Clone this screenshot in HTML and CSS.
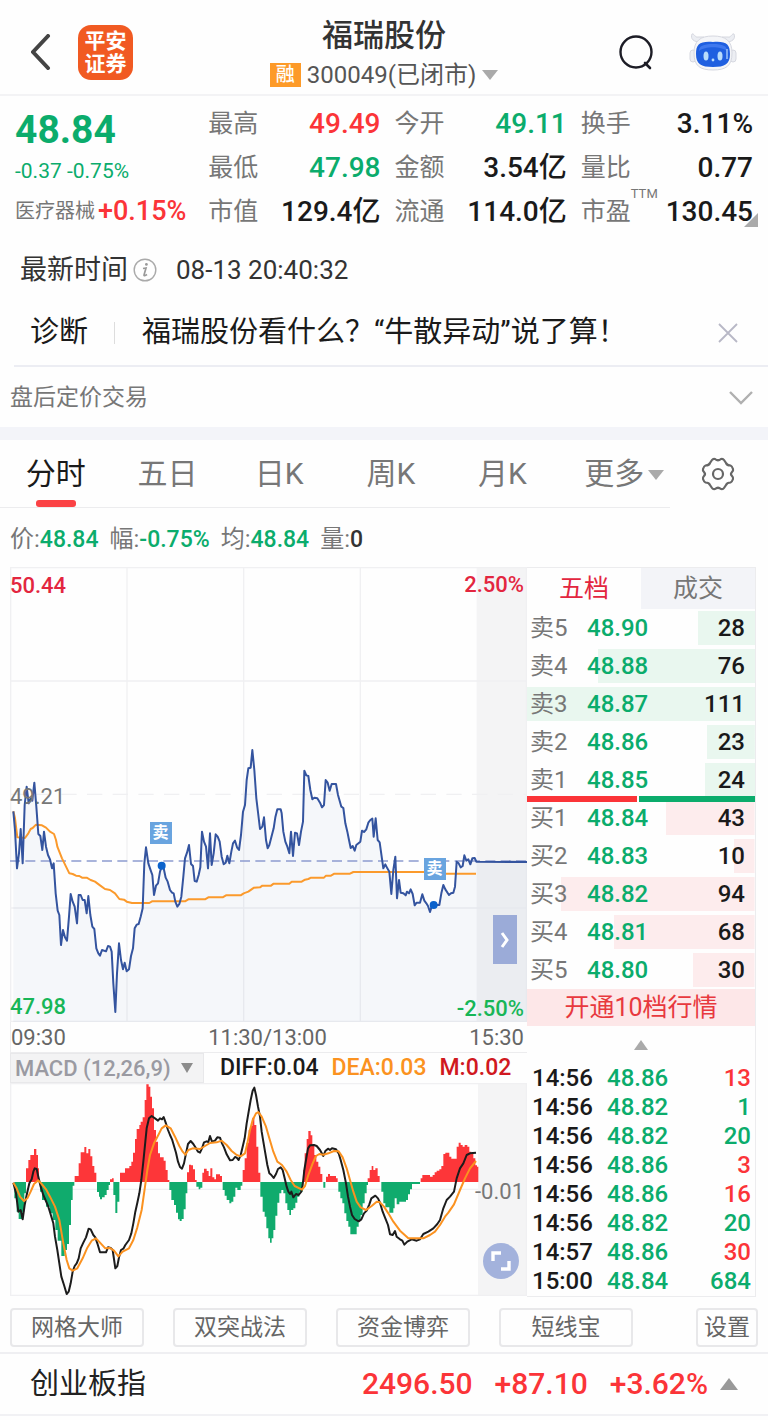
FILE: index.html
```html
<!DOCTYPE html>
<html lang="zh-CN">
<head>
  <meta charset="UTF-8">
  <meta name="viewport" content="width=device-width, initial-scale=1">
  <title>福瑞股份 300049</title>
  <link rel="stylesheet" href="styles.css">
</head>
<body>
  <header class="topbar">
    <div class="topbar-left">
      <button class="icon-btn" aria-label="返回">
        <svg width="20" height="36" viewBox="0 0 20 36"><path d="M17 2 L2 18 L17 34" fill="none" stroke="#444" stroke-width="4" stroke-linecap="round"/></svg>
      </button>
      <div class="logo"><span>平安</span><span>证券</span></div>
    </div>
    <div class="topbar-title">
      <h1>福瑞股份</h1>
      <div class="code"><span class="tag">融</span>300049(已闭市)<span class="tri-down"></span></div>
    </div>
    <div class="topbar-right">
      <button class="icon-btn" aria-label="搜索">
        <svg width="34" height="36" viewBox="0 0 34 36"><circle cx="17" cy="18" r="15.5" fill="none" stroke="#1d1d26" stroke-width="2.4"/><path d="M26 29 L31 34" stroke="#1d1d26" stroke-width="2.6" stroke-linecap="round"/></svg>
      </button>
      <button class="icon-btn" aria-label="智能助手">
        <svg width="48" height="40" viewBox="0 0 48 40">
          <g fill="#eceef3" stroke="#d6d8e0" stroke-width="1">
            <path d="M11 10 C5 10 1 7 3 2 C5 1 6 6 9 5 L15 5Z"/>
            <path d="M37 10 C43 10 47 7 45 2 C43 1 42 6 39 5 L33 5Z"/>
            <rect x="1" y="18" width="6" height="12" rx="3"/>
            <rect x="41" y="18" width="6" height="12" rx="3"/>
            <path d="M24 4 C37 4 43 9 43 21 C43 34 37 38 24 38 C11 38 5 34 5 21 C5 9 11 4 24 4Z" fill="#f4f5f8"/>
          </g>
          <path d="M24 10 C37 9 41 12 41 22 C41 32 36 35 24 35 C12 35 7 32 7 22 C7 12 11 9 24 10Z" fill="#1f5fe0"/>
          <path d="M24 12 C34 12 38 14 38 19 C32 14 16 14 10 19 C10 14 14 12 24 12Z" fill="#3f78ee"/>
          <ellipse cx="17" cy="24" rx="2.5" ry="4.5" fill="#b9dcfb"/>
          <ellipse cx="31" cy="24" rx="2.5" ry="4.5" fill="#b9dcfb"/>
          <circle cx="24" cy="28" r="1.4" fill="#b9dcfb"/>
          <path d="M38 17 V27" stroke="#9dc3fb" stroke-width="1.5"/>
        </svg>
      </button>
    </div>
  </header>

  <section class="quote">
    <div class="quote-main">
      <div class="price green">48.84</div>
      <div class="change green">-0.37 -0.75%</div>
      <div class="sector">医疗器械<b class="red">+0.15%</b></div>
    </div>
    <dl>
      <div><dt>最高</dt><dd class="red">49.49</dd></div>
      <div><dt>最低</dt><dd class="green">47.98</dd></div>
      <div><dt>市值</dt><dd>129.4亿</dd></div>
    </dl>
    <dl>
      <div><dt>今开</dt><dd class="green">49.11</dd></div>
      <div><dt>金额</dt><dd>3.54亿</dd></div>
      <div><dt>流通</dt><dd>114.0亿</dd></div>
    </dl>
    <dl>
      <div><dt>换手</dt><dd>3.11%</dd></div>
      <div><dt>量比</dt><dd>0.77</dd></div>
      <div><dt>市盈<span class="ttm">TTM</span></dt><dd>130.45</dd></div>
    </dl>
    <span class="corner"></span>
  </section>

  <div class="time-row">
    <span>最新时间</span>
    <svg width="24" height="24" viewBox="0 0 24 24"><circle cx="12" cy="12" r="10.8" fill="none" stroke="#aaa" stroke-width="1.4"/><circle cx="13.4" cy="6.4" r="1.4" fill="#999"/><path d="M10 10.5 L13 10 L11 17 Q11 18.5 14 16.5" fill="none" stroke="#999" stroke-width="1.7"/></svg>
    <time>08-13 20:40:32</time>
  </div>

  <div class="diagnose">
    <span>诊断</span>
    <i class="divider"></i>
    <a href="#">福瑞股份看什么？“牛散异动”说了算！</a>
    <button class="icon-btn" aria-label="关闭">
      <svg width="20" height="20" viewBox="0 0 20 20"><path d="M1 1 L19 19 M19 1 L1 19" stroke="#b8b8c6" stroke-width="1.8"/></svg>
    </button>
  </div>

  <button class="after-hours">
    <span>盘后定价交易</span>
    <svg width="26" height="16" viewBox="0 0 26 16"><path d="M2 2 L13 13 L24 2" fill="none" stroke="#b0b0b0" stroke-width="2.4"/></svg>
  </button>

  <div class="band"></div>

  <nav class="periods">
    <div class="period-list">
      <button class="active">分时</button>
      <button>五日</button>
      <button>日K</button>
      <button>周K</button>
      <button>月K</button>
      <button class="more">更多<span class="tri-down"></span></button>
    </div>
    <button class="icon-btn gear" aria-label="图表设置">
      <svg width="34" height="34" viewBox="0 0 34 34"><path d="M11 3 Q12 1.5 14 2 Q17 4.500 20 2 Q22 1.500 23 3 L25 6 Q26 8.500 29.500 8.500 Q31 9 32 12 Q32.500 13.500 31 15 Q29 17 31 19 Q32.500 20.500 32 22 Q31 25 29.500 25.500 Q26 25.500 25 28 L23 31 Q22 32.500 20 32 Q17 29.500 14 32 Q12 32.500 11 31 L9 28 Q8 25.500 4.500 25.500 Q3 25 2 22 Q1.500 20.500 3 19 Q5 17 3 15 Q1.500 13.500 2 12 Q3 9 4.500 8.500 Q8 8.500 9 6 Z" fill="none" stroke="#666" stroke-width="2.2"/><circle cx="17" cy="17" r="5" fill="none" stroke="#666" stroke-width="2.2"/></svg>
    </button>
  </nav>

  <div class="info-row">
    <span>价:<b class="green">48.84</b></span>
    <span>幅:<b class="green">-0.75%</b></span>
    <span>均:<b class="green">48.84</b></span>
    <span>量:<b>0</b></span>
  </div>

  <main class="board">
    <div class="charts">
      <div class="plot">
        <svg viewBox="0 0 1551 1365">
          <rect x="1400" y="0" width="151" height="1365" fill="#f4f4f5"/>
          <g fill="none" stroke="#f0f0f2" stroke-width="4">
            <path d="M2 2 H1549 V1363 H2 Z M351 0 V1365 M701 0 V1365 M1051 0 V1365 M0 342 H1551 M0 1023 H1551"/>
            <path d="M0 682 H1551" stroke-dasharray="46 31"/>
          </g>
          <g transform="translate(-30 489)" fill="none" stroke-linejoin="round">
            <path fill="#2f53a5" fill-opacity=".045" stroke="none" d="M40,876 L40,244 45,300 51,415 57,370 62,297 68,400 74,225 80,170 86,220 92,205 97,212 103,158 109,230 115,312 121,318 127,360 132,305 138,350 150,388 156,415 161,400 167,490 173,542 178,555 183,645 189,600 201,632 212,492 224,530 231,580 236,495 254,510 260,550 265,498 277,590 283,597 289,655 300,677 318,664 324,648 335,665 346,846 357,640 369,718 380,724 393,678 404,595 416,582 428,535 438,352 451,418 462,495 474,460 486,408 503,455 521,490 532,530 544,500 555,385 567,345 573,402 584,453 601,412 606,305 624,415 630,310 635,405 647,313 659,335 671,403 682,377 688,400 705,332 717,360 729,245 745,115 757,60 769,205 780,297 792,262 804,355 821,295 832,238 842,238 850,305 868,370 873,305 879,378 885,308 897,345 909,275 913,122 925,138 937,208 952,205 966,232 972,225 977,150 989,182 995,162 1008,162 1024,230 1030,234 1036,280 1052,354 1064,362 1081,335 1086,302 1117,266 1121,320 1127,265 1133,330 1139,337 1150,415 1168,425 1174,492 1186,380 1191,505 1197,450 1202,488 1232,478 1244,526 1260,518 1267,493 1290,546 1301,525 1318,525 1330,465 1347,495 1360,488 1370,395 1382,412 1388,408 1393,376 1399,392 1411,403 1424,384 1429,395 1581,396 V876Z"/>
            <path stroke="#8d9cd0" stroke-width="5" stroke-dasharray="30 16" d="M30,393 H1581"/>
            <path stroke="#fb9a2c" stroke-width="6" d="M40,244 45,265 52,322 75,324 85,310 92,297 98,294 108,284 126,286 138,293 150,305 162,312 168,330 172,350 186,385 208,430 218,432 228,437 238,438 246,443 260,443 272,450 285,455 300,466 315,477 330,480 345,490 358,507 372,509 380,515 396,519 448,519 456,514 555,514 565,508 615,508 625,502 668,502 678,496 722,496 731,490 745,485 762,473 780,472 787,467 813,467 821,461 868,461 875,455 905,455 915,449 925,447 933,443 972,443 978,437 993,437 1003,431 1050,431 1060,426 1270,426 1330,431 1428,431"/>
            <path stroke="#34549f" stroke-width="6" d="M40,244 45,300 51,415 57,370 62,297 68,400 74,225 80,170 86,220 92,205 97,212 103,158 109,230 115,312 121,318 127,360 132,305 138,350 144,375 150,388 156,415 161,400 167,490 173,542 178,555 183,645 189,600 195,622 201,632 207,560 212,492 218,515 224,530 231,580 236,495 242,495 248,510 254,510 260,550 265,498 271,555 277,590 283,597 289,655 295,670 300,677 306,660 318,664 324,648 330,650 335,665 340,760 346,846 351,730 357,640 363,690 369,718 374,698 380,724 387,718 393,678 399,655 404,595 410,584 416,582 422,560 428,535 433,400 438,352 445,400 451,418 457,435 462,495 468,467 474,460 480,425 486,408 491,415 497,443 503,455 510,480 516,488 521,490 526,515 532,530 538,522 544,500 550,440 555,385 561,368 567,345 573,402 579,408 584,453 590,455 596,435 601,412 606,305 612,335 618,350 624,415 630,310 635,405 641,370 647,313 653,320 659,335 665,380 671,403 677,398 682,377 688,400 694,365 699,340 705,332 711,352 717,360 723,315 729,245 735,225 740,150 745,115 752,113 757,60 763,120 769,205 775,255 780,297 787,290 792,262 798,330 803,355 808,345 814,322 821,295 826,262 832,238 842,238 845,250 850,305 856,335 862,350 868,370 873,305 879,378 885,308 891,310 897,345 903,305 909,275 913,122 919,136 925,138 931,180 937,208 943,203 952,205 960,218 966,232 972,225 977,150 983,158 989,182 995,162 1008,162 1014,195 1024,230 1030,234 1036,280 1042,305 1047,330 1052,354 1058,348 1064,362 1069,345 1081,335 1086,302 1092,306 1099,298 1105,278 1111,270 1117,266 1121,320 1127,265 1133,330 1139,337 1145,380 1150,415 1156,403 1162,415 1168,425 1174,492 1180,420 1186,380 1191,505 1197,450 1202,488 1210,490 1217,496 1221,485 1227,490 1232,478 1238,492 1244,526 1250,518 1260,518 1267,493 1273,512 1279,520 1284,528 1290,546 1295,530 1301,525 1318,525 1324,490 1330,465 1336,478 1347,495 1353,490 1360,488 1365,470 1370,395 1376,400 1382,412 1388,408 1393,376 1399,392 1405,388 1411,403 1417,385 1424,384 1429,395 1581,396"/>
            <circle cx="485" cy="407" r="12" fill="#0b62cc"/>
            <circle cx="1301" cy="525" r="12" fill="#0b62cc"/>
          </g>
        </svg>
        <span class="label top-left crimson">50.44</span>
        <span class="label top-right crimson">2.50%</span>
        <span class="label middle-left">49.21</span>
        <span class="label bottom-left lime">47.98</span>
        <span class="label bottom-right lime">-2.50%</span>
        <span class="mark mark-first">卖</span>
        <span class="mark mark-second">卖</span>
        <button class="expand" aria-label="收起盘口">
          <svg width="10" height="18" viewBox="0 0 10 18"><path d="M2 2 L7 9 L2 16" fill="none" stroke="#fff" stroke-width="3"/></svg>
        </button>
      </div>

      <div class="axis"><span>09:30</span><span>11:30/13:00</span><span>15:30</span></div>

      <div class="macd-head">
        <div class="macd-select">
          <select aria-label="技术指标"><option>MACD (12,26,9)</option></select>
          <span class="tri-down"></span>
        </div>
        <span>DIFF:0.04</span>
        <span class="orange">DEA:0.03</span>
        <span class="deep-red">M:0.02</span>
      </div>

      <div class="plot">
        <svg viewBox="0 0 1551 639">
          <rect x="1404" y="0" width="147" height="639" fill="#f4f4f5"/>
          <path d="M2 2 H1549 V637 H2 Z M0 319 H1404" fill="none" stroke="#f0f0f2" stroke-width="4"/>
          <g transform="translate(-30 -189)" fill="none" stroke-linejoin="round">
            <path fill="#fd3639" d="M78,486 V445 H85 V420 H91 V405 H102 V387 H109 V405 H114 V445 H117 V486Z M224,486 V468 H236 V430 H242 V397 H253 V381 H259 V400 H265 V387 H271 V409 H277 V438 H283 V458 H289 V486Z M330,486 V478 H336 V475 H341 V486Z M360,486 V458 H375 V445 H388 V438 H394 V425 H399 V398 H405 V357 H410 V327 H418 V315 H422 V305 H428 V292 H434 V240 H439 V193 H446 V200 H451 V230 H456 V265 H462 V330 H468 V365 H474 V400 H480 V412 H491 V422 H497 V450 H503 V480 H508 V486Z M561,486 V457 H567 V434 H573 V436 H579 V448 H585 V480 H590 V486Z M607,486 V458 H612 V446 H620 V453 H626 V468 H631 V445 H637 V472 H643 V478 H648 V463 H660 V468 H666 V486Z M728,486 V450 H734 V415 H740 V368 H746 V330 H752 V318 H757 V293 H763 V315 H769 V380 H775 V458 H781 V486Z M910,486 V450 H914 V400 H920 V357 H925 V333 H932 V346 H937 V375 H943 V405 H949 V425 H955 V440 H961 V462 H967 V486Z M978,486 V470 H984 V462 H990 V468 H1008 V475 H1013 V486Z M1103,486 V475 H1109 V450 H1115 V438 H1120 V450 H1126 V445 H1133 V468 H1139 V486Z M1262,486 V475 H1267 V465 H1290 V470 H1298 V465 H1304 V457 H1310 V452 H1318 V448 H1324 V438 H1330 V402 H1336 V398 H1348 V410 H1354 V416 H1370 V380 H1376 V368 H1382 V375 H1388 V380 H1394 V375 H1402 V380 H1408 V395 H1414 V402 H1420 V415 H1426 V436 H1431 V440 H1435 V486Z"/>
            <path fill="#10ab6d" d="M43,486 V535 H50 V575 H56 V597 H68 V575 H73 V520 H78 V486Z M120,486 V515 H126 V540 H138 V560 H150 V580 H158 V600 H166 V630 H173 V662 H184 V708 H194 V690 H201 V672 H207 V615 H213 V540 H218 V497 H223 V486Z M291,486 V516 H297 V530 H300 V538 H306 V532 H314 V525 H320 V510 H326 V495 H330 V486Z M340,486 V525 H346 V579 H352 V545 H358 V486Z M508,486 V510 H514 V540 H522 V555 H528 V578 H534 V598 H539 V603 H545 V597 H551 V568 H557 V520 H562 V486Z M589,486 V500 H596 V508 H601 V503 H607 V486Z M668,486 V510 H674 V527 H680 V540 H688 V550 H694 V545 H700 V530 H706 V503 H712 V510 H722 V497 H727 V486Z M781,486 V530 H788 V575 H794 V590 H799 V625 H805 V655 H810 V668 H815 V655 H820 V630 H826 V587 H832 V548 H838 V520 H844 V510 H850 V520 H856 V550 H862 V570 H868 V585 H873 V570 H880 V565 H886 V548 H892 V530 H898 V515 H908 V486Z M970,486 V503 H976 V486Z M1015,486 V515 H1021 V535 H1027 V550 H1033 V580 H1039 V603 H1045 V620 H1051 V643 H1070 V620 H1076 V603 H1082 V585 H1088 V550 H1094 V520 H1100 V495 H1104 V486Z M1144,486 V515 H1150 V550 H1156 V562 H1168 V578 H1180 V565 H1184 V535 H1190 V553 H1198 V545 H1218 V540 H1224 V523 H1230 V508 H1236 V492 H1260 V486Z"/>
            <path stroke="#1c1c1c" stroke-width="6" d="M40,488 48,520 55,575 62,570 68,598 74,555 80,525 88,490 95,478 100,455 104,445 110,447 115,470 122,500 130,525 145,560 160,610 165,650 172,690 178,730 184,770 192,795 200,822 206,815 212,790 218,755 224,738 230,730 236,715 242,685 250,668 258,652 266,626 272,628 280,645 286,652 292,670 300,697 318,697 324,682 332,684 338,690 346,745 352,738 357,712 363,690 370,686 376,675 387,660 394,640 400,610 406,575 412,548 418,520 424,480 430,425 436,365 440,325 447,295 455,288 466,296 474,302 480,295 486,298 491,291 497,308 504,330 510,345 516,358 522,378 528,398 534,425 540,441 546,446 552,430 558,400 564,372 572,363 580,372 588,385 594,395 600,398 606,385 612,367 620,364 625,366 630,348 636,365 645,362 652,352 660,353 666,370 672,382 680,403 690,421 698,420 705,411 710,413 716,420 722,405 728,380 734,355 740,310 746,275 752,240 758,212 763,203 768,225 774,260 780,290 785,335 790,365 796,400 802,435 808,460 814,465 821,474 828,462 834,447 842,442 848,450 854,475 860,500 865,515 870,522 874,515 880,532 888,522 896,525 904,515 908,495 913,450 918,420 924,385 930,376 942,375 950,378 960,390 970,408 976,393 984,386 990,390 996,385 1008,388 1016,400 1022,420 1030,450 1038,490 1044,530 1050,560 1056,585 1064,597 1076,604 1084,598 1092,580 1100,572 1108,553 1114,535 1126,527 1134,535 1140,548 1148,575 1156,595 1164,615 1170,643 1178,645 1185,633 1190,650 1200,658 1207,662 1213,674 1222,665 1235,658 1250,662 1260,658 1270,642 1285,635 1300,625 1312,612 1320,600 1330,565 1340,540 1350,530 1362,515 1370,475 1380,445 1390,430 1400,405 1410,400 1428,398"/>
            <path stroke="#fb9220" stroke-width="6" d="M40,488 50,505 60,530 72,543 82,535 92,515 102,492 115,481 125,492 138,508 150,530 165,560 178,600 190,670 200,720 208,745 218,752 232,745 248,715 262,683 275,662 288,655 300,668 316,685 330,684 342,692 355,709 368,695 387,685 400,660 412,622 425,570 435,500 442,450 450,405 462,370 475,345 485,325 497,316 512,325 525,350 538,378 548,395 556,404 565,390 578,385 600,387 615,378 630,369 650,367 665,362 680,375 695,393 710,405 722,409 735,400 742,370 750,330 758,300 768,280 775,276 785,290 798,320 808,355 820,395 832,425 846,435 860,455 872,480 884,498 906,509 915,498 925,465 938,430 948,408 958,402 970,404 985,400 1002,393 1016,394 1028,412 1040,445 1050,480 1060,515 1070,545 1082,562 1098,570 1115,558 1130,545 1140,547 1152,560 1165,580 1180,605 1200,632 1225,655 1270,655 1290,645 1305,635 1320,615 1335,590 1345,578 1362,553 1380,510 1395,475 1410,445 1428,423"/>
          </g>
        </svg>
        <span class="label macd-value">-0.01</span>
        <button class="fullscreen" aria-label="全屏">
          <svg width="20" height="20" viewBox="0 0 20 20"><path d="M2 10 V2 H10 M18 10 V18 H10" fill="none" stroke="#fff" stroke-width="3.400"/></svg>
        </button>
      </div>
    </div>

    <aside class="depth">
      <div class="depth-tabs">
        <button class="active">五档</button>
        <button>成交</button>
      </div>
      <table class="orders asks">
        <tr style="--w: 25%"><th>卖5</th><td>48.90</td><td>28</td></tr>
        <tr style="--w: 69%"><th>卖4</th><td>48.88</td><td>76</td></tr>
        <tr style="--w: 100%"><th>卖3</th><td>48.87</td><td>111</td></tr>
        <tr style="--w: 21%"><th>卖2</th><td>48.86</td><td>23</td></tr>
        <tr style="--w: 22%"><th>卖1</th><td>48.85</td><td>24</td></tr>
      </table>
      <div class="ratio"><i style="width: 49%"></i></div>
      <table class="orders bids">
        <tr style="--w: 39%"><th>买1</th><td>48.84</td><td>43</td></tr>
        <tr style="--w: 9%"><th>买2</th><td>48.83</td><td>10</td></tr>
        <tr style="--w: 85%"><th>买3</th><td>48.82</td><td>94</td></tr>
        <tr style="--w: 62%"><th>买4</th><td>48.81</td><td>68</td></tr>
        <tr style="--w: 27%"><th>买5</th><td>48.80</td><td>30</td></tr>
      </table>
      <button class="upgrade">开通10档行情</button>
      <button class="fold" aria-label="展开"><span class="tri-up"></span></button>
      <table class="ticks">
        <tr><td>14:56</td><td>48.86</td><td class="red">13</td></tr>
        <tr><td>14:56</td><td>48.82</td><td class="green">1</td></tr>
        <tr><td>14:56</td><td>48.82</td><td class="green">20</td></tr>
        <tr><td>14:56</td><td>48.86</td><td class="red">3</td></tr>
        <tr><td>14:56</td><td>48.86</td><td class="red">16</td></tr>
        <tr><td>14:56</td><td>48.82</td><td class="green">20</td></tr>
        <tr><td>14:57</td><td>48.86</td><td class="red">30</td></tr>
        <tr><td>15:00</td><td>48.84</td><td class="green">684</td></tr>
      </table>
    </aside>
  </main>

  <div class="tools">
    <button>网格大师</button>
    <button>双突战法</button>
    <button>资金博弈</button>
    <button>短线宝</button>
    <button class="settings">设置</button>
  </div>

  <footer class="index-row">
    <span class="index-name">创业板指</span>
    <span>2496.50</span>
    <span>+87.10</span>
    <span>+3.62%</span>
    <span class="tri-up"></span>
  </footer>
</body>
</html>
```
FILE: styles.css
```css
* {
  margin: 0;
  padding: 0;
  box-sizing: border-box;
}

body {
  font-family: Roboto, "Noto Sans CJK SC", sans-serif;
  background: #fefefe;
  color: #1a1a1a;
}

button {
  font-family: inherit;
  background: none;
  border: none;
  color: inherit;
  cursor: pointer;
}

svg {
  display: block;
}

b {
  font-weight: 500;
}

.green { color: #0bac6c; }
.red { color: #fb3438; }
.crimson { color: #e3263f; }
.lime { color: #17b657; }
.orange { color: #fb9220; }
.deep-red { color: #d01820; }

.tri-down,
.tri-up {
  display: inline-block;
  border-left: 8px solid transparent;
  border-right: 8px solid transparent;
}

.tri-down {
  border-top: 10px solid #aaa;
}

.tri-up {
  border-bottom: 12px solid #aaa;
}

/* header */
.topbar {
  display: grid;
  grid-template-columns: 1fr auto 1fr;
  align-items: center;
  height: 96px;
  padding: 10px 31px 0;
  border-bottom: 2px solid #f3f3f5;
}

.topbar-left,
.topbar-right {
  display: flex;
  align-items: center;
}

.topbar-left {
  gap: 27px;
}

.topbar-right {
  justify-content: flex-end;
  gap: 36px;
}

.logo {
  display: grid;
  gap: 1px;
  width: 55px;
  padding: 5px 0;
  border-radius: 13px;
  background: #f15a22;
  color: #fff;
  font-size: 21px;
  font-weight: 700;
  line-height: 22px;
  text-align: center;
}

.topbar-title {
  align-self: end;
  text-align: center;
}

.topbar-title h1 {
  font-size: 31px;
  font-weight: 500;
  line-height: 40px;
  color: #333;
}

.code {
  display: flex;
  align-items: center;
  gap: 6px;
  font-size: 24px;
  line-height: 38px;
  color: #555;
}

.tag {
  padding: 0 6px;
  background: #fd9a28;
  color: #fff;
  font-size: 19px;
  font-weight: 500;
  line-height: 24px;
}

/* quote summary */
.quote {
  position: relative;
  display: grid;
  grid-template-columns: 179fr 172fr 172fr 172fr;
  gap: 14px;
  padding: 6px 15px 0;
}

.price {
  font-size: 39px;
  font-weight: 700;
  line-height: 56px;
}

.change {
  font-size: 21px;
  line-height: 26px;
}

.sector {
  display: flex;
  align-items: center;
  gap: 3px;
  font-size: 20px;
  line-height: 55px;
  color: #777;
  white-space: nowrap;
}

.sector b {
  font-size: 27px;
}

.quote dl div {
  display: flex;
  justify-content: space-between;
  line-height: 44px;
}

.quote dt {
  position: relative;
  font-size: 25px;
  color: #777;
}

.quote dd {
  font-size: 28px;
  font-weight: 500;
}

.ttm {
  position: absolute;
  left: 100%;
  top: -4px;
  font-size: 13px;
  line-height: 16px;
}

.corner {
  position: absolute;
  right: 10px;
  bottom: 12px;
  border-bottom: 14px solid #aaa;
  border-left: 14px solid transparent;
}

.time-row {
  display: flex;
  align-items: center;
  gap: 5px;
  padding: 0 20px;
  font-size: 27px;
  line-height: 62px;
  color: #333;
}

.time-row time {
  margin-left: 14px;
  font-size: 26px;
}

.diagnose {
  display: flex;
  align-items: center;
  margin-left: 14px;
  padding: 2px 30px 3px 16px;
  border-bottom: 2px solid #ecedf3;
  font-size: 29px;
  line-height: 59px;
}

.divider {
  width: 1px;
  height: 22px;
  margin: 0 27px 0 26px;
  background: #ddd;
}

.diagnose a {
  color: inherit;
  text-decoration: none;
}

.diagnose .icon-btn {
  margin-left: auto;
}

.after-hours {
  display: flex;
  justify-content: space-between;
  align-items: center;
  width: 100%;
  padding: 1px 14px 0 10px;
  font-size: 23px;
  line-height: 59px;
  color: #777;
}

.band {
  height: 13px;
  background: #f3f4f9;
}

/* period tabs */
.periods {
  display: flex;
}

.period-list {
  flex: 1;
  display: flex;
  border-bottom: 1px solid #ececee;
}

.period-list button {
  position: relative;
  flex: 1;
  font-size: 30px;
  line-height: 67px;
  color: #777;
  white-space: nowrap;
}

.period-list .active {
  color: #1a1a1a;
}

.period-list .active::after {
  content: "";
  position: absolute;
  left: 50%;
  bottom: 0;
  width: 40px;
  height: 7px;
  margin-left: -20px;
  border-radius: 3px;
  background: #fb4245;
}

.more .tri-down {
  position: absolute;
  right: 6px;
  top: 30px;
}

.gear {
  width: 98px;
  padding-left: 31px;
}

.info-row {
  display: flex;
  gap: 11px;
  padding: 4px 10px 0;
  font-size: 24px;
  line-height: 55px;
  color: #777;
}

.info-row b {
  font-size: 23px;
}

.info-row b:not(.green) {
  color: #333;
}

/* charts and order book */
.board {
  display: grid;
  grid-template-columns: 517fr 229fr;
  padding: 0 12px 0 10px;
}

.plot {
  position: relative;
}

.plot > svg {
  width: 100%;
}

.label {
  position: absolute;
  font-size: 22px;
  font-weight: 500;
  line-height: 26px;
}

.top-left { left: 0; top: 6px; }
.top-right { right: 3px; top: 5px; }
.middle-left { left: 0; top: 50%; margin-top: -11px; color: #777; font-weight: 400; }
.bottom-left { left: 0; bottom: 2px; }
.bottom-right { right: 3px; bottom: 0; }
.macd-value { right: 3px; top: 50%; margin-top: -11px; color: #777; font-weight: 400; }

.mark {
  position: absolute;
  width: 22px;
  background: #69a4df;
  color: #fff;
  font-size: 16px;
  font-weight: 700;
  line-height: 22px;
  text-align: center;
}

.mark-first { left: 27%; top: 56%; }
.mark-second { left: 80%; top: 64%; }

.expand {
  position: absolute;
  right: 10px;
  bottom: 58px;
  display: flex;
  align-items: center;
  justify-content: center;
  width: 24px;
  height: 49px;
  background: #9babd8;
}

.fullscreen {
  position: absolute;
  right: 8px;
  bottom: 17px;
  display: flex;
  align-items: center;
  justify-content: center;
  width: 36px;
  height: 36px;
  border-radius: 50%;
  background: #a3b2dc;
}

.axis {
  display: flex;
  justify-content: space-between;
  padding: 1px 3px 0 0;
  border-left: 1px solid #ededef;
  font-size: 22px;
  line-height: 29px;
  color: #666;
}

.macd-head {
  display: flex;
  align-items: center;
  gap: 13px;
  border-top: 1px solid #ececee;
  font-size: 23px;
  font-weight: 500;
  line-height: 30px;
}

.macd-select {
  position: relative;
  margin-right: 3px;
}

.macd-select select {
  display: block;
  width: 194px;
  height: 30px;
  padding-left: 4px;
  appearance: none;
  border: 1px solid #e8e8ea;
  background: #f3f3f4;
  color: #9a9aa2;
  font-family: inherit;
  font-size: 22px;
  font-weight: 500;
}

.macd-select .tri-down {
  position: absolute;
  right: 11px;
  top: 10px;
  border-left-width: 6px;
  border-right-width: 6px;
  border-top-color: #8c8c8c;
}

.depth {
  border: 1px solid #ececee;
  border-left: none;
}

.depth-tabs {
  display: flex;
}

.depth-tabs button {
  flex: 1;
  background: #f3f4f8;
  color: #777;
  font-size: 25px;
  line-height: 41px;
}

.depth-tabs .active {
  background: none;
  color: #e3263f;
}

table {
  width: 100%;
  border-collapse: collapse;
  font-size: 24px;
  font-weight: 500;
}

.orders tr {
  height: 38px;
  background: linear-gradient(var(--bar), var(--bar)) right center / var(--w) 34px no-repeat;
}

.asks { --bar: #e9f7ef; }
.bids { --bar: #fdeced; }

.orders th {
  width: 60px;
  padding-left: 3px;
  color: #777;
  font-weight: 400;
  line-height: 38px;
  text-align: left;
}

.orders td:nth-child(2),
.ticks td:nth-child(2) {
  color: #0bac6c;
}

.orders td:last-child {
  padding-right: 10px;
  text-align: right;
}

.ratio {
  position: relative;
  height: 6px;
  margin: -3px 0;
  background: #0bac6c;
}

.ratio i {
  display: block;
  height: 6px;
  background: #fb3438;
  border-right: 2px solid #fff;
}

.upgrade {
  width: 100%;
  background: #fde7e8;
  color: #e8393e;
  font-size: 25px;
  line-height: 37px;
}

.fold {
  display: flex;
  align-items: center;
  justify-content: center;
  width: 100%;
  height: 38px;
}

.fold .tri-up {
  border-left-width: 7px;
  border-right-width: 7px;
  border-bottom-width: 10px;
}

.ticks td {
  line-height: 29px;
}

.ticks td:first-child {
  width: 80px;
  padding-left: 5px;
}

.ticks td:last-child {
  padding-right: 4px;
  text-align: right;
}

/* bottom tools */
.tools {
  display: flex;
  gap: 29px;
  padding: 11px 10px 5px;
  border-bottom: 2px solid #efeff2;
}

.tools button {
  flex: 0 1 134px;
  border: 2px solid #e8e8ea;
  border-radius: 4px;
  color: #666;
  font-size: 23px;
  line-height: 35px;
  white-space: nowrap;
}

.tools .settings {
  flex-basis: 62px;
  margin-left: auto;
}

.index-row {
  display: flex;
  align-items: center;
  gap: 22px;
  margin-bottom: 5px;
  padding: 0 30px;
  border-bottom: 2px solid #f1f1f4;
  color: #fb3438;
  font-size: 30px;
  font-weight: 500;
  line-height: 60px;
}

.index-name {
  margin-right: auto;
  color: #222;
  font-size: 29px;
  font-weight: 400;
}

.index-row .tri-up {
  margin-left: -10px;
  border-left-width: 9px;
  border-right-width: 9px;
  border-bottom-color: #999;
}
```
